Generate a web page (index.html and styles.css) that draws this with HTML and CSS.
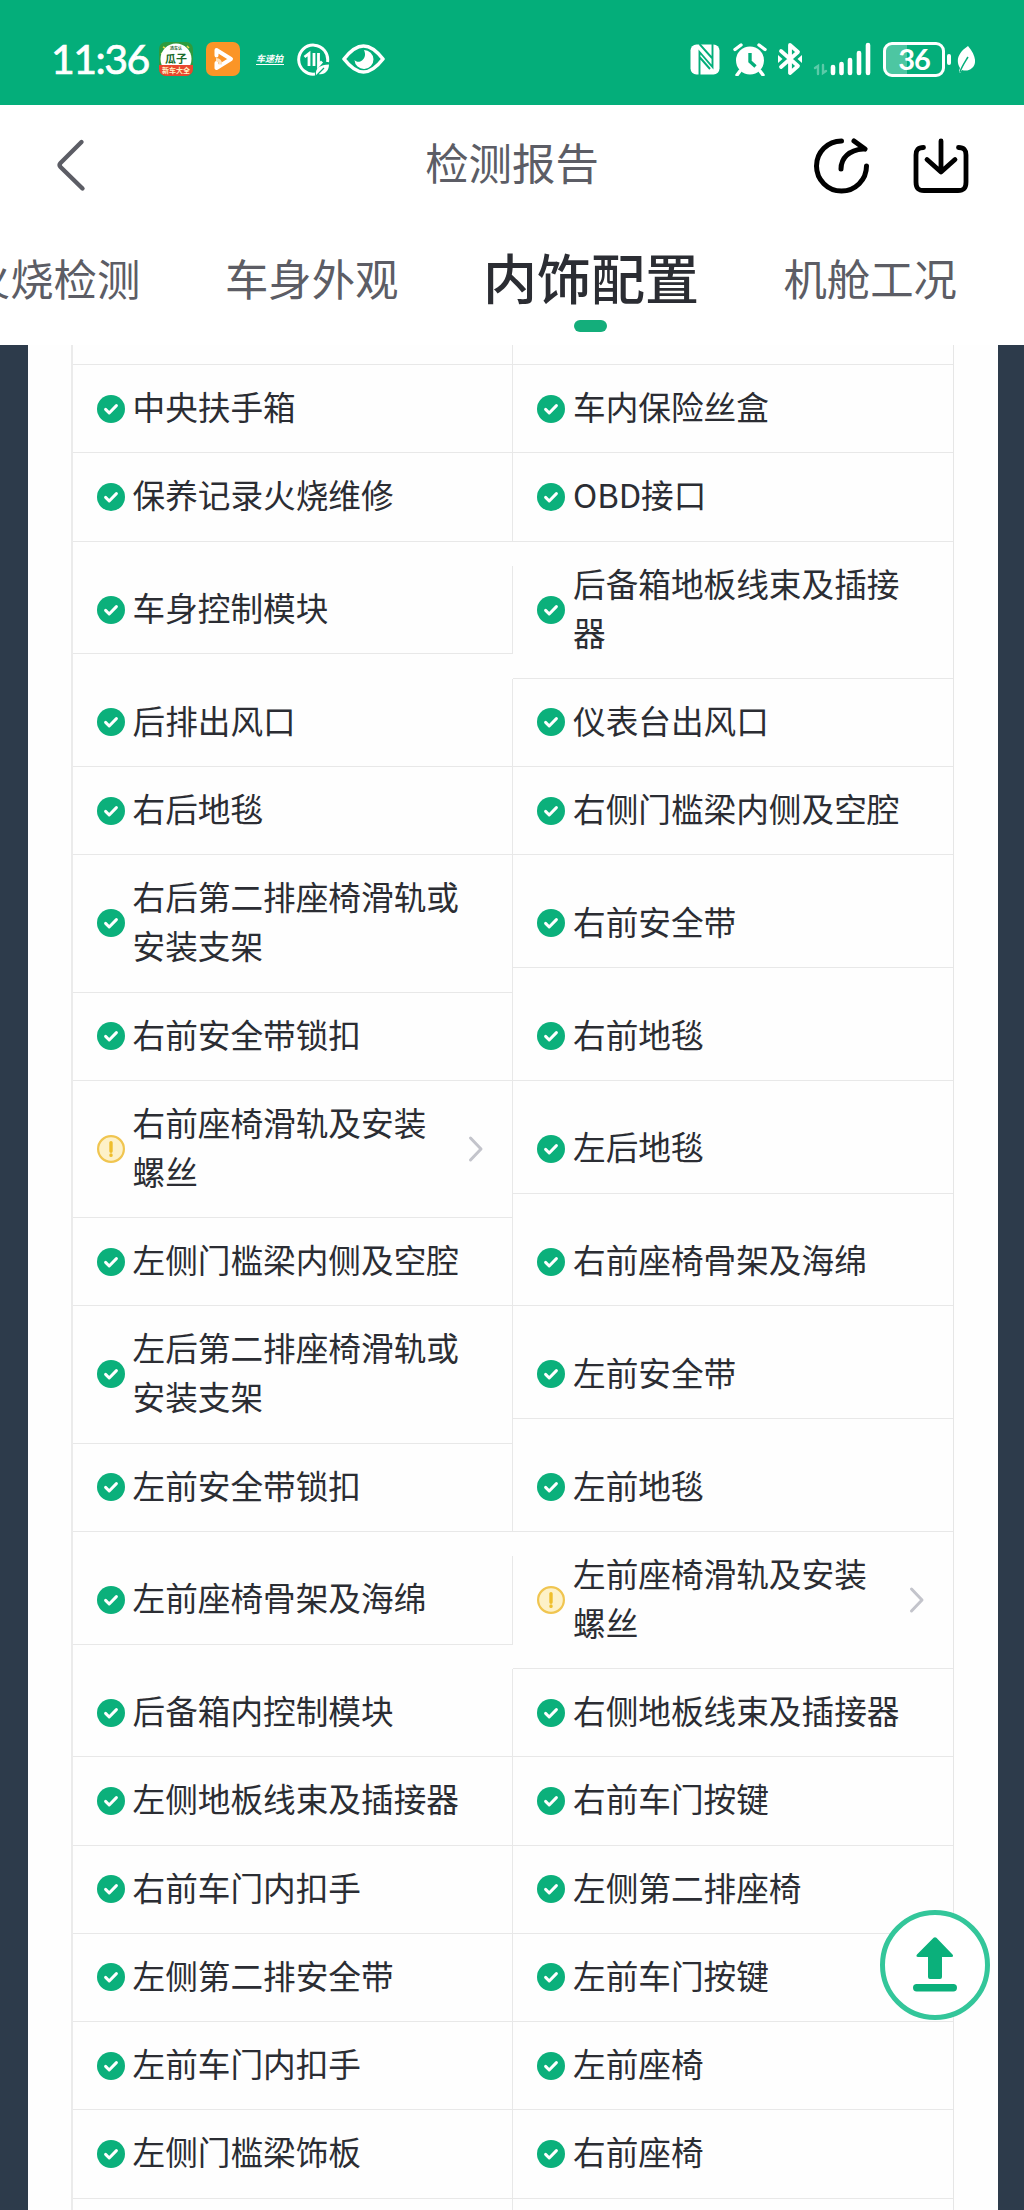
FILE: index.html
```html
<!DOCTYPE html>
<html lang="zh-CN">
  <head>
    <meta charset="UTF-8" />
    <meta name="viewport" content="width=device-width, initial-scale=1.0" />
    <title>检测报告</title>
    <link rel="stylesheet" href="styles.css">
  </head>
  <body>

    <!-- shared icons -->
    <svg class="sprite">
      <symbol id="ok" viewBox="0 0 28 28">
        <circle cx="14" cy="14" r="14" fill="#0bb07b" />
        <path d="M8.6 14.4l3.6 3.6 7.2-7.4" fill="none" stroke="#fff" stroke-width="3" stroke-linecap="round" stroke-linejoin="round" />
      </symbol>
      <symbol id="warn" viewBox="0 0 28 28">
        <circle cx="14" cy="14" r="12.9" fill="#fdf1c8" stroke="#f0c550" stroke-width="2.2" />
        <path d="M14 7.6v8.6M14 20v.4" fill="none" stroke="#efbe2c" stroke-width="3.4" stroke-linecap="round" />
      </symbol>
      <symbol id="more" viewBox="0 0 16 28">
        <path d="M2.5 3l10.5 11-10.5 11" fill="none" stroke="#c3c4cb" stroke-width="3" stroke-linecap="round" stroke-linejoin="round" />
      </symbol>
    </svg>

    <div class="status-bar">
      <div class="status-left">
        <span class="time">11:36</span>
        <svg class="app-icon" width="34" height="34" viewBox="0 0 34 34">
          <rect width="34" height="34" rx="7" fill="#2e9b3e" />
          <path d="M4 5l2 1M28 4l2 2M2 12l2-1M31 12l-2-1" stroke="#e8d94a" stroke-width="1.5" />
          <circle cx="17" cy="17" r="15.5" fill="#fff" />
          <path d="M0 23h34v4a7 7 0 0 1-7 7H7a7 7 0 0 1-7-7z" fill="#e8472f" />
          <text x="17" y="8" class="guazi-top">选车认</text>
          <text x="17" y="21" class="guazi-main">瓜子</text>
          <text x="17" y="31" class="guazi-foot">新车大全</text>
        </svg>
        <svg class="play-icon" width="34" height="34" viewBox="0 0 34 34">
          <rect width="34" height="34" rx="7" fill="#fb9527" />
          <path d="M10.500 13.500V8l14.500 9-14.500 9v-5" fill="none" stroke="#fff" stroke-width="4" stroke-linejoin="round" stroke-linecap="round" />
          <path d="M10 17.500c3 0 4.500 2 4.500 5" fill="none" stroke="#ffe2bd" stroke-width="3" />
        </svg>
        <span class="shot-icon">车速拍</span>
        <svg class="data-icon" width="33" height="33" viewBox="0 0 33 33" fill="none" stroke="#fff">
          <path d="M18 31A14.5 14.5 0 1 1 30.5 19" stroke-width="3" />
          <path d="M7.5 14l4.500-3.500V23M17 10v13M21.500 10v12.500l3.500-4" stroke-width="2.800" />
          <path d="M19 32c-1-7 4-10 13-10.5 0 6-4 11-11 9.5z" fill="#fff" stroke="none" />
          <path d="M20 32l7-7" stroke="#04ae7a" stroke-width="1.2" />
        </svg>
        <svg class="eye-icon" width="43" height="30" viewBox="0 0 43 30">
          <path d="M2 15C9 6 15 2 21.500 2S34 6 41 15C34 24 28 28 21.500 28S9 24 2 15z" fill="none" stroke="#fff" stroke-width="3.6" stroke-linejoin="round" />
          <path d="M22 6a9.500 9.500 0 1 1-9.500 10c1.500 2 5 2.500 7.500.5 3-2.500 4-6 2-10.500z" fill="#fff" />
        </svg>
      </div>

      <div class="status-right">
        <svg width="30" height="31" viewBox="0 0 30 31">
          <rect x=".5" y=".5" width="29" height="30" rx="6" fill="#fff" />
          <path d="M9.500 31V8l13 15V8M9.500 13L20 25M22.500 23V0M9.500 0L22 14" fill="none" stroke="#04ae7a" stroke-width="1.9" />
        </svg>
        <svg class="alarm-icon" width="34" height="33" viewBox="0 0 34 33">
          <circle cx="17" cy="17.5" r="14" fill="#fff" />
          <path d="M2 6.500L8 2M32 6.500L26 2M7 28l-3 4M27 28l3 4" stroke="#fff" stroke-width="3.4" stroke-linecap="round" />
          <path d="M17 10v8.500l5.500 5" fill="none" stroke="#04ae7a" stroke-width="3.4" />
        </svg>
        <svg class="bt-icon" width="24" height="34" viewBox="0 0 24 34" fill="none" stroke="#fff">
          <path d="M3 9l17 15-8 7V3l8 7L3 25" stroke-width="3.8" stroke-linejoin="round" stroke-linecap="round" />
          <path d="M0 13l4.500 4L0 21zM24 13l-4.500 4 4.500 4z" fill="#fff" stroke="none" />
        </svg>
        <svg class="signal-icon" width="59" height="34" viewBox="0 0 59 34" stroke="#fff" stroke-linecap="round">
          <path d="M2 26l3-2v8M10 23v8l3-2" stroke-width="2.4" fill="none" opacity=".35" />
          <path d="M20 25v6M28.500 22v9M37 18v13M46 11v20M55 3v28" stroke-width="4.6" />
        </svg>
        <div class="battery"><span>36</span></div>
        <div class="battery-cap"></div>
        <svg class="leaf-icon" width="18" height="27" viewBox="0 0 18 27">
          <path d="M11 0c8 9 9 18 4 22-3 3-7 3-10 2l-2 3-1-2 1-3C-2 14 2 6 11 0z" fill="#fff" />
          <path d="M3 26c2-6 5-10 8-15" fill="none" stroke="#04ae7a" stroke-width="1.5" />
        </svg>
      </div>
    </div>

    <div class="nav-bar">
      <svg class="back" width="32" height="54" viewBox="0 0 32 54">
        <path d="M26.500 4L5.500 25q-2 2 0 4L27.500 50.500" fill="none" stroke="#5c5d65" stroke-width="4.4" stroke-linecap="round" />
      </svg>
      <h1 class="title">检测报告</h1>
      <div class="nav-actions">
        <svg width="56" height="56" viewBox="0 0 56 56" fill="none" stroke="#000" stroke-width="5" stroke-linecap="round" stroke-linejoin="round">
          <path d="M28.500 3A25 25 0 1 0 53.500 28" />
          <path d="M28 31c0-11 8-19 22-20M41 3l11 8" />
        </svg>
        <svg width="56" height="56" viewBox="0 0 56 56" fill="none" stroke="#000" stroke-width="4.8" stroke-linecap="round" stroke-linejoin="round">
          <path d="M10.500 9.500C5 9.500 3 12 3 17v27c0 6 2 8.500 8 8.500h34c6 0 8-2.500 8-8.500V17c0-5-2-7.500-7.500-7.500" />
          <path d="M28 3v30M14 21.500L28 34l14-12.500" />
        </svg>
      </div>
    </div>

    <div class="tabs">
      <div class="tab">火烧检测</div>
      <div class="tab">车身外观</div>
      <div class="tab active">内饰配置</div>
      <div class="tab">机舱工况</div>
    </div>

    <div class="report">
      <div class="sheet">
        <div class="list">
          <div class="row row-cut">
            <div class="cell"></div>
            <div class="cell"></div>
          </div>
          <div class="row">
            <div class="cell"><svg class="icon"><use href="#ok" /></svg><span>中央扶手箱</span></div>
            <div class="cell"><svg class="icon"><use href="#ok" /></svg><span>车内保险丝盒</span></div>
          </div>
          <div class="row">
            <div class="cell"><svg class="icon"><use href="#ok" /></svg><span>保养记录火烧维修</span></div>
            <div class="cell"><svg class="icon"><use href="#ok" /></svg><span>OBD接口</span></div>
          </div>
          <div class="row">
            <div class="cell"><svg class="icon"><use href="#ok" /></svg><span>车身控制模块</span></div>
            <div class="cell"><svg class="icon"><use href="#ok" /></svg><span>后备箱地板线束及插接器</span></div>
          </div>
          <div class="row">
            <div class="cell"><svg class="icon"><use href="#ok" /></svg><span>后排出风口</span></div>
            <div class="cell"><svg class="icon"><use href="#ok" /></svg><span>仪表台出风口</span></div>
          </div>
          <div class="row">
            <div class="cell"><svg class="icon"><use href="#ok" /></svg><span>右后地毯</span></div>
            <div class="cell"><svg class="icon"><use href="#ok" /></svg><span>右侧门槛梁内侧及空腔</span></div>
          </div>
          <div class="row">
            <div class="cell"><svg class="icon"><use href="#ok" /></svg><span>右后第二排座椅滑轨或安装支架</span></div>
            <div class="cell"><svg class="icon"><use href="#ok" /></svg><span>右前安全带</span></div>
          </div>
          <div class="row">
            <div class="cell"><svg class="icon"><use href="#ok" /></svg><span>右前安全带锁扣</span></div>
            <div class="cell"><svg class="icon"><use href="#ok" /></svg><span>右前地毯</span></div>
          </div>
          <div class="row">
            <div class="cell"><svg class="icon"><use href="#warn" /></svg><span>右前座椅滑轨及安装螺丝</span><svg class="more"><use href="#more" /></svg></div>
            <div class="cell"><svg class="icon"><use href="#ok" /></svg><span>左后地毯</span></div>
          </div>
          <div class="row">
            <div class="cell"><svg class="icon"><use href="#ok" /></svg><span>左侧门槛梁内侧及空腔</span></div>
            <div class="cell"><svg class="icon"><use href="#ok" /></svg><span>右前座椅骨架及海绵</span></div>
          </div>
          <div class="row">
            <div class="cell"><svg class="icon"><use href="#ok" /></svg><span>左后第二排座椅滑轨或安装支架</span></div>
            <div class="cell"><svg class="icon"><use href="#ok" /></svg><span>左前安全带</span></div>
          </div>
          <div class="row">
            <div class="cell"><svg class="icon"><use href="#ok" /></svg><span>左前安全带锁扣</span></div>
            <div class="cell"><svg class="icon"><use href="#ok" /></svg><span>左前地毯</span></div>
          </div>
          <div class="row">
            <div class="cell"><svg class="icon"><use href="#ok" /></svg><span>左前座椅骨架及海绵</span></div>
            <div class="cell"><svg class="icon"><use href="#warn" /></svg><span>左前座椅滑轨及安装螺丝</span><svg class="more"><use href="#more" /></svg></div>
          </div>
          <div class="row">
            <div class="cell"><svg class="icon"><use href="#ok" /></svg><span>后备箱内控制模块</span></div>
            <div class="cell"><svg class="icon"><use href="#ok" /></svg><span>右侧地板线束及插接器</span></div>
          </div>
          <div class="row">
            <div class="cell"><svg class="icon"><use href="#ok" /></svg><span>左侧地板线束及插接器</span></div>
            <div class="cell"><svg class="icon"><use href="#ok" /></svg><span>右前车门按键</span></div>
          </div>
          <div class="row">
            <div class="cell"><svg class="icon"><use href="#ok" /></svg><span>右前车门内扣手</span></div>
            <div class="cell"><svg class="icon"><use href="#ok" /></svg><span>左侧第二排座椅</span></div>
          </div>
          <div class="row">
            <div class="cell"><svg class="icon"><use href="#ok" /></svg><span>左侧第二排安全带</span></div>
            <div class="cell"><svg class="icon"><use href="#ok" /></svg><span>左前车门按键</span></div>
          </div>
          <div class="row">
            <div class="cell"><svg class="icon"><use href="#ok" /></svg><span>左前车门内扣手</span></div>
            <div class="cell"><svg class="icon"><use href="#ok" /></svg><span>左前座椅</span></div>
          </div>
          <div class="row">
            <div class="cell"><svg class="icon"><use href="#ok" /></svg><span>左侧门槛梁饰板</span></div>
            <div class="cell"><svg class="icon"><use href="#ok" /></svg><span>右前座椅</span></div>
          </div>
          <div class="row row-cut">
            <div class="cell"></div>
            <div class="cell"></div>
          </div>
        </div>
      </div>
    </div>

    <!-- back to top -->
    <div class="to-top">
      <svg width="46" height="56" viewBox="0 0 46 56" fill="#0bb07b">
        <path d="M21.600.8q1.400-1.300 2.800 0L40.500 17.500q1.600 2.500-1.300 2.500H30v20q0 2-2 2H18q-2 0-2-2V20H6.300q-2.900 0-1.300-2.500z" />
        <rect x="1" y="47" width="44" height="7.500" rx="3.700" />
      </svg>
    </div>

  </body>
</html>
```
FILE: styles.css
```css
* {
    box-sizing: border-box;
}

body {
    margin: 0;
    height: 2210px;
    display: flex;
    flex-direction: column;
    overflow: hidden;
    background: #fff;
    color: #2b2d33;
    font-family: "Noto Sans CJK SC", sans-serif;
}

svg {
    display: block;
    flex-shrink: 0;
}

.sprite {
    display: none;
}

/* status bar */
.status-bar {
    height: 105px;
    flex-shrink: 0;
    display: flex;
    justify-content: space-between;
    padding: 13px 49px 0 51px;
    background: #04ae7a;
    color: #fff;
}

.status-left,
.status-right {
    display: flex;
    align-items: center;
}

.time {
    width: 108px;
    font-family: Lato, sans-serif;
    font-size: 41px;
    line-height: 46px;
    letter-spacing: -1.5px;
    -webkit-text-stroke: 0.7px #fff;
}

.guazi-top,
.guazi-main,
.guazi-foot {
    text-anchor: middle;
    font-weight: bold;
}

.guazi-top {
    font-size: 4px;
    fill: #2f6b35;
}

.guazi-main {
    font-size: 11px;
    fill: #176a2a;
}

.guazi-foot {
    font-size: 7px;
    fill: #fff3c4;
}

.play-icon {
    margin-left: 13px;
}

.shot-icon {
    margin-left: 16px;
    width: 28px;
    font-size: 9px;
    font-weight: bold;
    font-style: italic;
    line-height: 11px;
    border-bottom: 1px solid #fff;
    white-space: nowrap;
}

.data-icon {
    margin-left: 13px;
}

.eye-icon {
    margin-left: 12px;
}

.alarm-icon {
    margin-left: 13px;
}

.bt-icon {
    margin-left: 11px;
}

.signal-icon {
    margin-left: 11px;
}

.battery {
    margin-left: 11px;
    width: 62px;
    height: 35px;
    border: 3px solid #fff;
    border-radius: 9px;
    background: linear-gradient(to right, #4dc6a2 38%, transparent 38%);
    font-family: Lato, sans-serif;
    font-size: 29px;
    font-weight: bold;
    line-height: 28px;
    letter-spacing: -1px;
    text-align: center;
}

.battery-cap {
    margin-left: 2px;
    width: 4px;
    height: 11px;
    border-radius: 2px;
    background: #fff;
}

.leaf-icon {
    margin-left: 6px;
}

/* title */
.nav-bar {
    height: 120px;
    flex-shrink: 0;
    display: grid;
    grid-template-columns: 1fr auto 1fr;
    align-items: center;
    padding: 0 55px;
    color: #5c5d65;
}

.title {
    margin: 0;
    font-size: 43.4px;
    font-weight: normal;
    line-height: 60px;
    padding-bottom: 9px;
}

.nav-actions {
    display: flex;
    justify-content: flex-end;
    gap: 44px;
    padding-top: 2px;
}

/* tabs */
.tabs {
    height: 120px;
    flex-shrink: 0;
    display: flex;
    justify-content: flex-end;
    gap: 84.5px;
    padding: 14px 67px 0 0;
}

.tab {
    font-size: 43.4px;
    line-height: 76px;
    color: #5c5d65;
    white-space: nowrap;
}

.tab.active {
    display: flex;
    flex-direction: column;
    align-items: center;
    font-size: 54px;
    font-weight: 500;
    color: #2b2d33;
}

.tab.active::after {
    content: "";
    width: 33px;
    height: 12px;
    margin-top: 5px;
    border-radius: 6px;
    background: #14ae7b;
}

/* report list */
.report {
    flex: 1;
    min-height: 0;
    overflow: hidden;
    padding: 0 26px 0 28px;
    background: #2d3b4b;
}

.sheet {
    height: 100%;
    padding: 0 44px 0 43px;
    background: #fefefe;
}

.list {
    height: 100%;
    border-left: 2px solid #ebebeb;
    border-right: 1px solid #e6e6e6;
}

.row {
    display: grid;
    grid-template-columns: 1fr 1fr;
    align-items: center;
}

.cell {
    display: flex;
    align-items: center;
    padding: 19.13px 28px 19.13px 24px;
    border-bottom: 1px solid #e8e8e8;
    font-size: 32.65px;
    line-height: 49px;
}

.cell:first-child {
    padding-left: 23.5px;
    border-right: 1px solid #e8e8e8;
}

.cell span {
    width: 340px;
    margin-top: -3px;
    margin-bottom: 3px;
}

.row-cut .cell {
    height: 20px;
    padding: 0;
}

.icon {
    width: 28px;
    height: 28px;
    margin-right: 8px;
}

.more {
    width: 16px;
    height: 28px;
    margin-left: auto;
}

/* the arrow takes room from the label */
.cell span:not(:last-child) {
    width: 316px;
}

.to-top {
    position: fixed;
    right: 34px;
    bottom: 190px;
    width: 110px;
    height: 110px;
    display: flex;
    align-items: center;
    justify-content: center;
    border: 5px solid #33c69a;
    border-radius: 50%;
    background: #fff;
}
```
